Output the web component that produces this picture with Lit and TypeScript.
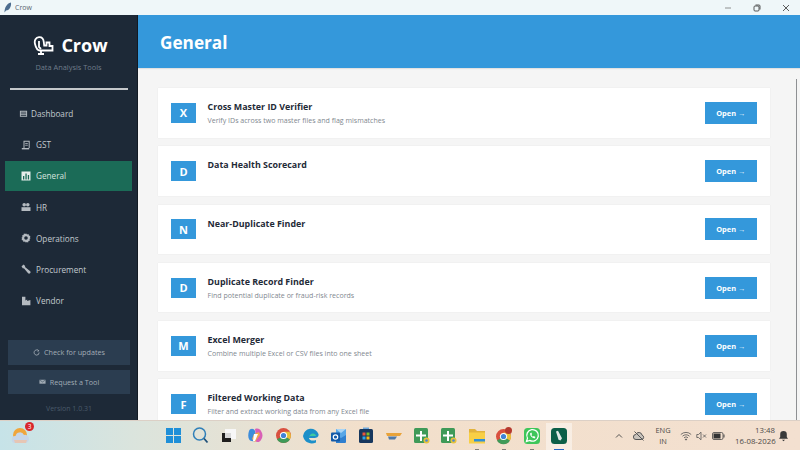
import { LitElement, html, css, svg } from 'lit';
import { customElement, property } from 'lit/decorators.js';

const navIcons: Record<string, unknown> = {
  Dashboard: svg`<path fill-rule="evenodd" d="M1 2h8v6.500H1zM2 3v1h6V3zM2 5v.8h6V5zM2 6.700v.8h6v-.8z"/>`,
  GST: svg`<path d="M2.500 .8h6.200v7.200h-1V1.800H3.500V8h-1z"/><rect x="4.200" y="3" width="2.600" height=".8"/><rect x="4.200" y="4.800" width="2.600" height=".8"/><rect x=".8" y="8" width="7.400" height="1.400"/>`,
  General: svg`<path fill-rule="evenodd" d="M.5.5h9v9h-9zM2 5v3.500h1.300V5zM4.400 2.500v6h1.300v-6zM6.800 4v4.500h1.300V4z"/>`,
  HR: svg`<circle cx="3.200" cy="2.800" r="1.800"/><circle cx="6.800" cy="2.800" r="1.800"/><path d="M.5 9V5.200h9V9z"/>`,
  Operations: svg`<path fill-rule="evenodd" d="M5 .3l1 1.200 1.500-.5.400 1.500 1.500.4-.5 1.500L9.700 5l-1.200 1 .5 1.500-1.500.4-.4 1.500-1.500-.5L5 9.700l-1-1.200-1.500.5-.4-1.500-1.500-.4.500-1.500L.3 5l1.200-1-.5-1.500 1.500-.4.400-1.500 1.500.5zM5 3.200a1.800 1.800 0 100 3.600 1.800 1.800 0 000-3.600z"/>`,
  Procurement: svg`<path d="M.5 2.500L2.500.5l1.700 1.500-.2.900 5.200 4.300a1.500 1.500 0 01-2.100 2.100L2.900 4.300l-.9.200z"/>`,
  Vendor: svg`<path d="M1 9.300V.8h3.400v3.800l1.800-1v1.500l3.200-1.100v5.300z"/>`,
};

const navItems = ['Dashboard', 'GST', 'General', 'HR', 'Operations', 'Procurement', 'Vendor'];

const tools = [
  { letter: 'X', name: 'Cross Master ID Verifier', desc: 'Verify IDs across two master files and flag mismatches' },
  { letter: 'D', name: 'Data Health Scorecard', desc: '' },
  { letter: 'N', name: 'Near-Duplicate Finder', desc: '' },
  { letter: 'D', name: 'Duplicate Record Finder', desc: 'Find potential duplicate or fraud-risk records' },
  { letter: 'M', name: 'Excel Merger', desc: 'Combine multiple Excel or CSV files into one sheet' },
  { letter: 'F', name: 'Filtered Working Data', desc: 'Filter and extract working data from any Excel file' },
];

const sheetIcon = svg`<rect x="2" y="2" width="14" height="15" rx="1.500" fill="#3f9a58"/><path d="M8 5h2v3.500h4v2h-4V15H8v-4.500H4v-2h4z" fill="#fff"/><circle cx="14.500" cy="14.500" r="3" fill="#e8c23a"/><circle cx="14.500" cy="14.500" r="1.300" fill="#4a86d8"/>`;

const taskIcons = [
  svg`<path d="M2 2h7v7H2zM10 2h7v7h-7zM2 10h7v7H2zM10 10h7v7h-7z" fill="#1f8fd8"/>`,
  svg`<circle cx="8.500" cy="8" r="6" fill="none" stroke="#2f7fb8" stroke-width="1.500"/><path d="M13 12.500l3.500 4" stroke="#1e4f78" stroke-width="1.800"/>`,
  svg`<rect x="6" y="3" width="11" height="10" fill="#f7f7f7"/><rect x="3" y="7" width="9" height="9" fill="#1f1f1f"/><rect x="6" y="7" width="6" height="5" fill="#d8d8d8"/>`,
  svg`<path d="M3 5c1-3 5-3 6 0l2 8c-1 3-7 3-8 0-1-2-1-5 0-8z" fill="#3d8ddb"/><path d="M9 3c3-1 5 0 6 2 2 3 2 6 0 9-1 2-4 3-6 1l1-5z" fill="#d95fb6"/><path d="M8 8l5-2 1 3-5 7-3-3z" fill="#f2a64b"/><path d="M8 8h4l-3 7H7z" fill="#fff"/>`,
  svg`<circle cx="9.500" cy="9.500" r="7.500" fill="#d9503f"/><path d="M9.500 9.500L3 13.300a7.500 7.500 0 0013 0z" fill="#3f9a58"/><path d="M9.500 9.500l6.500 3.800a7.500 7.500 0 00-.5-7.500H9.500z" fill="#e8c23a"/><circle cx="9.500" cy="9.500" r="3.600" fill="#fff"/><circle cx="9.500" cy="9.500" r="2.600" fill="#3f83d6"/>`,
  svg`<path d="M2 10a8 8 0 0115.500-2c.500 3-2 4-4.500 4H8c0 2 3 3.500 7 2v2.500C9 19 3 16 2 10z" fill="#1c8fc9"/><path d="M8 12c0-3 2-4.500 4-4.500 1.500 0 3 1 3 2.500H8z" fill="#3fc9a0"/>`,
  svg`<path d="M7 3h10v9H7z" fill="#58a6e6"/><path d="M7 3l5 4 5-4z" fill="#a8d4f5"/><path d="M7 9l5 3 5-3v7a1 1 0 01-1 1H7z" fill="#2f7fcf"/><rect x="2" y="6.500" width="9" height="9" rx="1" fill="#1259a8"/><circle cx="6.500" cy="11" r="2.200" fill="none" stroke="#fff" stroke-width="1.200"/>`,
  svg`<rect x="3" y="3" width="14" height="14" rx="1.500" fill="#17375e"/><path d="M7 1.500h6V3H7z" fill="#6fa8dc"/><rect x="6.500" y="6.500" width="3" height="3" fill="#e9553b"/><rect x="10.500" y="6.500" width="3" height="3" fill="#7cbb2c"/><rect x="6.500" y="10.500" width="3" height="3" fill="#2ea6e8"/><rect x="10.500" y="10.500" width="3" height="3" fill="#f7b712"/>`,
  svg`<path d="M2 7h16l-2 3H3z" fill="#e9a33a"/><path d="M4 10.500h9l-2 3H5z" fill="#4f79a8"/>`,
  sheetIcon,
  sheetIcon,
  svg`<path d="M2 3h6l2 2h8v3H2z" fill="#e2b33c"/><rect x="2" y="6.500" width="16" height="11" fill="#f8cf45"/><rect x="7" y="13" width="11" height="2.500" fill="#2f8fd8"/>`,
  svg`<circle cx="9.500" cy="10.500" r="7.500" fill="#d9503f"/><path d="M9.500 10.500L3 14.500a7.500 7.500 0 0013 0z" fill="#3f9a58"/><path d="M9.500 10.500l6.500 4a7.500 7.500 0 00-.500-8H9.500z" fill="#e8c23a"/><circle cx="9.500" cy="10.500" r="3.600" fill="#fff"/><circle cx="9.500" cy="10.500" r="2.600" fill="#3f83d6"/><circle cx="14.500" cy="4.500" r="3.500" fill="#b5392e"/>`,
  svg`<rect x="2" y="2" width="16" height="16" rx="3.500" fill="#3ec65a"/><path d="M4.500 15.500l1-3.300a5.800 5.800 0 112.200 2.200z" fill="none" stroke="#fff" stroke-width="1.300"/><path d="M8 7.500c0 2.500 2 4.500 4.500 5l1-1.500-1.800-1-.8.700c-.7-.4-1.200-1-1.500-1.600l.7-.8-.8-1.800z" fill="#fff"/>`,
  svg`<rect x="2" y="2" width="16" height="16" rx="3.500" fill="#0c5f48"/><path d="M7 5.500l2-.8 4 7.500-1.500 2.300-2-.8z" fill="#dfe9e5"/>`,
];

@customElement('app-root')
export class AppRoot extends LitElement {
  @property({ type: String }) active = 'General';

  static styles = css`
    :host {
      display: block;
      width: 800px;
      height: 450px;
      overflow: hidden;
      font-family: "Open Sans", "Noto Sans", sans-serif;
    }

    .window {
      display: flex;
      flex-direction: column;
      height: 420px;
    }

    .titlebar {
      flex: none;
      height: 15px;
      display: flex;
      align-items: center;
      background: #eff7f9;
      padding: 0 10px 0 3px;
      font-size: 7px;
      color: #5b6670;
      gap: 3px;
    }

    .titlebar .caption {
      flex: 1;
    }

    .titlebar svg {
      display: block;
    }

    .controls {
      display: flex;
      align-items: center;
      gap: 21px;
    }

    .main {
      flex: 1;
      display: flex;
      min-height: 0;
    }

    .sidebar {
      flex: none;
      width: 137px;
      display: flex;
      flex-direction: column;
      background: #1d2937;
      border-right: 1px solid #121a23;
    }

    .brand {
      display: flex;
      align-items: center;
      justify-content: center;
      gap: 7px;
      height: 20px;
      margin-top: 20px;
      padding-left: 4px;
      color: #fff;
      font-size: 18px;
      font-weight: 700;
    }

    .tagline {
      margin-top: 6px;
      text-align: center;
      font-size: 7.400px;
      line-height: 12px;
      color: #6f7c8a;
    }

    .rule {
      height: 1.500px;
      margin: 15px 9px 0 10px;
      background: #c4c7ca;
    }

    nav {
      display: flex;
      flex-direction: column;
      gap: 1.200px;
      margin-top: 9px;
      padding: 0 5px;
    }

    .nav-item {
      display: flex;
      align-items: center;
      gap: 5px;
      height: 30px;
      padding-left: 16px;
      font-size: 8.200px;
      color: #c3c9cf;
    }

    .nav-item svg {
      width: 10px;
      height: 10px;
      fill: #b4bac0;
      flex: none;
    }

    .nav-item.dashboard {
      gap: 3px;
      padding-left: 14px;
    }

    .nav-item.dashboard svg {
      width: 9px;
      height: 9px;
    }

    .nav-item.active {
      background: #1b6b57;
      color: #d6e2de;
    }

    .nav-item.active svg {
      fill: #e6eeeb;
    }

    .footer {
      margin-top: auto;
      display: flex;
      flex-direction: column;
      gap: 5px;
      padding: 0 7px 0 8px;
    }

    .side-btn {
      height: 24.500px;
      display: flex;
      align-items: center;
      justify-content: center;
      gap: 4px;
      background: #2b3d50;
      color: #a2acb5;
      font-size: 7.200px;
    }

    .side-btn svg {
      width: 7px;
      height: 7px;
      flex: none;
    }

    .version {
      margin-top: -3px;
      height: 24px;
      display: flex;
      align-items: center;
      justify-content: center;
      color: #4a5a6a;
      font-size: 7px;
    }

    .page {
      flex: 1;
      min-width: 0;
      display: flex;
      flex-direction: column;
      background: #f5f5f5;
    }

    .page-head {
      flex: none;
      height: 53px;
      padding: 1px 0 0 22px;
      box-sizing: border-box;
      display: flex;
      align-items: center;
      background: #3498db;
      color: #fff;
      font-size: 17.200px;
      font-weight: 700;
      box-shadow: 0 1px 1px rgba(0, 0, 0, 0.08);
    }

    .scroll {
      position: relative;
      flex: 1;
      overflow: hidden;
      display: flex;
      flex-direction: column;
      gap: 8.750px;
      padding: 20px 30px 0 20px;
    }

    .scrollbar {
      position: absolute;
      top: 11px;
      bottom: 0;
      right: 3px;
      width: 1px;
      background: #8e9093;
    }

    .card {
      flex: none;
      height: 49.500px;
      display: flex;
      align-items: center;
      padding: 0 13px;
      background: #fff;
      box-shadow: 0 0 1px rgba(0, 0, 0, 0.1);
    }

    .badge {
      flex: none;
      width: 25px;
      height: 20px;
      display: flex;
      align-items: center;
      justify-content: center;
      background: #3498db;
      color: #fff;
      font-size: 11px;
      font-weight: 700;
    }

    .info {
      flex: 1;
      align-self: stretch;
      padding: 12px 0 0 11.500px;
    }

    .name {
      font-size: 8.900px;
      line-height: 14px;
      font-weight: 700;
      color: #1f2b38;
    }

    .desc {
      margin-top: 1px;
      font-size: 7.050px;
      line-height: 11px;
      color: #7f8890;
    }

    .open {
      flex: none;
      width: 52.500px;
      height: 22px;
      display: flex;
      align-items: center;
      justify-content: center;
      background: #3498db;
      color: #fff;
      font-size: 7.400px;
      font-weight: 700;
    }

    .taskbar {
      position: relative;
      height: 30px;
      display: flex;
      align-items: center;
      background: linear-gradient(90deg, #c6e3e8 0%, #dce4dc 18%, #f2dfcb 45%, #f3e0d0 100%);
      border-top: 1px solid #dcd0c6;
      box-sizing: border-box;
    }

    .weather {
      position: relative;
      flex: none;
      width: 20px;
      height: 20px;
      margin-left: 11px;
    }

    .weather svg {
      display: block;
    }

    .notify {
      position: absolute;
      top: -4px;
      right: -3px;
      width: 9px;
      height: 9px;
      border-radius: 50%;
      background: #d8262c;
      color: #fff;
      font-size: 6.500px;
      line-height: 9px;
      text-align: center;
    }

    .apps {
      display: flex;
      gap: 7.570px;
      margin-left: 132.500px;
    }

    .app {
      position: relative;
      width: 20px;
      height: 20px;
    }

    .app svg {
      position: relative;
      z-index: 1;
      display: block;
      width: 20px;
      height: 20px;
    }

    .app.current::before {
      content: '';
      position: absolute;
      inset: -3px -3px -4px;
      background: rgba(255, 255, 255, 0.45);
    }

    .app.current::after {
      content: '';
      position: absolute;
      left: 5px;
      right: 5px;
      bottom: -5px;
      height: 2px;
      background: #2467c7;
    }

    .app.running::after {
      content: '';
      position: absolute;
      left: 8px;
      right: 8px;
      bottom: -5px;
      height: 1.500px;
      background: #85807b;
    }

    .tray {
      margin-left: auto;
      display: flex;
      align-items: center;
      color: #4d4a47;
      font-size: 7.400px;
      line-height: 11px;
      text-align: center;
    }

    .tray svg {
      display: block;
      flex: none;
    }

    .tray .cloud {
      margin-left: 9px;
    }

    .tray .speaker {
      margin-left: 4px;
    }

    .tray .battery {
      margin-left: 5px;
    }

    .tray .bell {
      margin: 0 11px 0 3px;
    }

    .clock {
      width: 40px;
      margin-left: 10px;
      font-size: 7.800px;
      text-align: right;
      white-space: nowrap;
    }

    .lang {
      width: 20px;
      margin: 0 7px 0 8px;
    }
  `;

  render() {
    return html`
      <div class="window">
        <div class="titlebar">
          <svg width="9" height="11" viewBox="0 0 9 11">
            <path d="M1.500 10.500C1.500 6 3.500 1.500 8 .5 8.500 5 6 8.500 3 8.500z" fill="#4c6d8f"/>
          </svg>
          <span class="caption">Crow</span>
          <div class="controls">
            <svg width="8" height="8" viewBox="0 0 8 8"><path d="M1 4h6" stroke="#777" stroke-width=".8"/></svg>
            <svg width="8" height="8" viewBox="0 0 8 8" fill="none" stroke="#333" stroke-width=".8">
              <rect x="1" y="2" width="5" height="5" rx="1"/><path d="M2.500 1h3.500a1 1 0 011 1v3.500"/>
            </svg>
            <svg width="8" height="8" viewBox="0 0 8 8"><path d="M1 1l6 6M7 1L1 7" stroke="#333" stroke-width=".8"/></svg>
          </div>
        </div>
        <div class="main">
          <aside class="sidebar">
            <div class="brand">
              <svg width="21" height="19" viewBox="0 0 21 19" fill="none" stroke="#fff" stroke-width="1.800">
                <path d="M2 8C1 4 3 1.500 6 1.200c3-.2 4.500 2 4.800 5l.4 3.300h2.300V6.500h3v3.500h3v4.500H7C4.500 14.500 2.800 11.500 2 8z"/>
                <path d="M6 5v6l2 2M8 15v3M5 18h6"/>
              </svg>
              <span>Crow</span>
            </div>
            <div class="tagline">Data Analysis Tools</div>
            <div class="rule"></div>
            <nav>
              ${navItems.map(item => html`
                <div class="nav-item ${item === this.active ? 'active' : ''} ${item === 'Dashboard' ? 'dashboard' : ''}">
                  <svg viewBox="0 0 10 10">${navIcons[item]}</svg>
                  <span>${item}</span>
                </div>
              `)}
            </nav>
            <div class="footer">
              <div class="side-btn">
                <svg viewBox="0 0 8 8" fill="none" stroke="#a2acb5" stroke-width="1">
                  <path d="M6.500 2A3 3 0 104 7a3 3 0 003-3M5.500 .8L6.700 2 5.300 2.800"/>
                </svg>
                <span>Check for updates</span>
              </div>
              <div class="side-btn">
                <svg viewBox="0 0 8 8"><path d="M.5 2h7v4.500h-7z" fill="#a2acb5"/><path d="M.5 2.200L4 4.500l3.500-2.300" fill="none" stroke="#2b3d50" stroke-width=".6"/></svg>
                <span>Request a Tool</span>
              </div>
              <div class="version">Version 1.0.31</div>
            </div>
          </aside>
          <section class="page">
            <header class="page-head">General</header>
            <div class="scroll">
              ${tools.map(tool => html`
                <div class="card">
                  <div class="badge">${tool.letter}</div>
                  <div class="info">
                    <div class="name">${tool.name}</div>
                    <div class="desc">${tool.desc}</div>
                  </div>
                  <div class="open">Open →</div>
                </div>
              `)}
              <div class="scrollbar"></div>
            </div>
          </section>
        </div>
      </div>
      <footer class="taskbar">
        <div class="weather">
          <svg width="20" height="20" viewBox="0 0 20 20">
            <circle cx="9" cy="9" r="7" fill="#f0a63c"/>
            <path d="M4 17a3.500 3.500 0 01.500-7 4.500 4.500 0 018.500-1 3.500 3.500 0 012 8z" fill="#c7d6e8"/>
            <path d="M4 17h11l1-3H3z" fill="#e6c6b4"/>
          </svg>
          <span class="notify">3</span>
        </div>
        <div class="apps">
          ${taskIcons.map((icon, i) => html`
            <div class="app ${i === 14 ? 'current' : ''} ${i >= 11 && i <= 13 ? 'running' : ''}">
              <svg viewBox="0 0 20 20">${icon}</svg>
            </div>
          `)}
        </div>
        <div class="tray">
          <svg width="10" height="10" viewBox="0 0 10 10" fill="none" stroke="#444" stroke-width=".9"><path d="M2 6.500L5 3.500l3 3"/></svg>
          <svg class="cloud" width="12" height="12" viewBox="0 0 12 12" fill="none" stroke="#555" stroke-width="1">
            <path d="M3 9.500a2.500 2.500 0 01-.2-5 3.300 3.300 0 016.300.7 2.200 2.200 0 01-.6 4.300z" fill="#c9c3bc"/><path d="M1.500 1.500l9 9"/>
          </svg>
          <div class="lang">ENG<br />IN</div>
          <svg width="12" height="10" viewBox="0 0 12 10" fill="none" stroke="#555" stroke-width=".8">
            <path d="M.8 3.500a7.500 7.500 0 0110.400 0M2.500 5.200a5 5 0 017 0M4 6.800a2.800 2.800 0 014 0"/><circle cx="6" cy="8.500" r=".6" fill="#555"/>
          </svg>
          <svg class="speaker" width="11" height="10" viewBox="0 0 11 10" fill="none" stroke="#555" stroke-width=".8">
            <path d="M.8 3.500h1.700L5 1.200v7.600L2.500 6.500H.8zM7 3.500l3 3M10 3.500l-3 3"/>
          </svg>
          <svg class="battery" width="13" height="8" viewBox="0 0 13 8">
            <rect x=".5" y=".5" width="10.500" height="7" rx="1.500" fill="none" stroke="#444" stroke-width=".8"/><rect x="1.500" y="1.500" width="7" height="5" fill="#333"/><rect x="11.500" y="2.500" width="1" height="3" fill="#444"/>
          </svg>
          <div class="clock">13:48<br />16-08-2026</div>
          <svg class="bell" width="11" height="12" viewBox="0 0 11 12">
            <path d="M5.500 1a3.300 3.300 0 00-3.300 3.300V7L1 8.800h9L8.800 7V4.300A3.300 3.300 0 005.500 1zM4 9.800h3l-1.500 1.500z" fill="#3a3a3a"/>
          </svg>
        </div>
      </footer>
    `;
  }
}

declare global {
  interface HTMLElementTagNameMap {
    'app-root': AppRoot;
  }
}
